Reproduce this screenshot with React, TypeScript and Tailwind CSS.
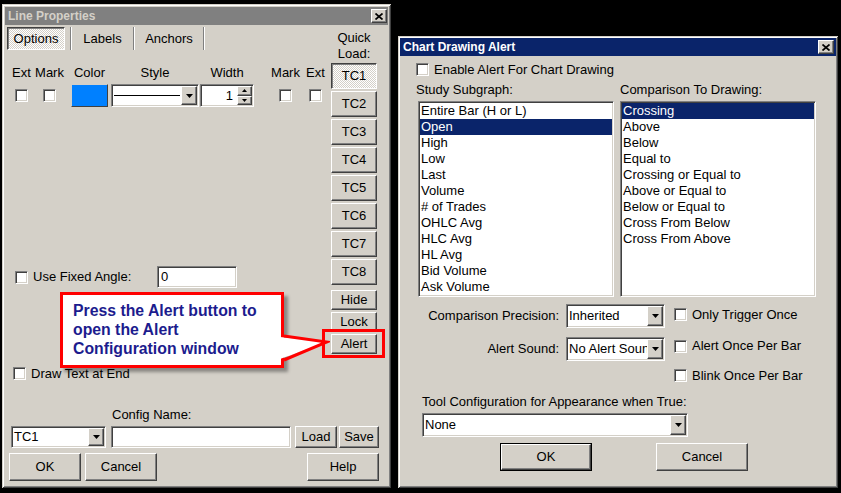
import React from "react";

const raised =
  "border border-t-white border-l-white border-r-[#404040] border-b-[#404040] shadow-[inset_-1px_-1px_0_#808080,inset_1px_1px_0_#d4d0c8]";
const sunken =
  "border border-t-[#808080] border-l-[#808080] border-r-white border-b-white shadow-[inset_1px_1px_0_#404040,inset_-1px_-1px_0_#d4d0c8]";
const pressed =
  "border border-t-[#404040] border-l-[#404040] border-r-white border-b-white shadow-[inset_1px_1px_0_#808080] bg-[repeating-conic-gradient(#ffffff_0%_25%,#d4d0c8_0%_50%)] bg-[length:2px_2px]";
const frame =
  "shadow-[inset_1px_1px_0_#d4d0c8,inset_-1px_-1px_0_#404040,inset_2px_2px_0_#ffffff,inset_-2px_-2px_0_#808080]";

function Arrow() {
  return (
    <svg width="7" height="4" viewBox="0 0 7 4">
      <path d="M0 0h7L3.5 4z" fill="#000" />
    </svg>
  );
}

function CloseBtn() {
  return (
    <div className={`${raised} bg-[#d4d0c8] w-[16px] h-[14px] flex items-center justify-center`}>
      <svg width="8" height="7" viewBox="0 0 8 7">
        <path d="M0.5 0.5L7.5 6.5M7.5 0.5L0.5 6.5" stroke="#000" strokeWidth="1.7" />
      </svg>
    </div>
  );
}

function Check({ className = "" }: { className?: string }) {
  return <div className={`${sunken} bg-white w-[13px] h-[13px] shrink-0 ${className}`} />;
}

function Btn({ children, className = "" }: { children?: React.ReactNode; className?: string }) {
  return (
    <div className={`${raised} bg-[#d4d0c8] flex items-center justify-center text-[13px] text-black ${className}`}>
      {children}
    </div>
  );
}

function Combo({ text, className = "" }: { text: string; className?: string }) {
  return (
    <div className={`${sunken} bg-white p-[1px] flex items-stretch ${className}`}>
      <div className="flex-1 overflow-hidden whitespace-nowrap pl-[1px] flex items-center text-[13px]">{text}</div>
      <div className={`${raised} bg-[#d4d0c8] w-[16px] flex items-center justify-center shrink-0`}>
        <Arrow />
      </div>
    </div>
  );
}

function Col({ label, width, className = "", children }: { label: string; width: string; className?: string; children: React.ReactNode }) {
  return (
    <div className={`flex flex-col items-center ${width} ${className}`}>
      <div className="h-[14px] leading-[14px] whitespace-nowrap">{label}</div>
      <div className="mt-[4px] h-[23px] w-full flex items-center justify-center">{children}</div>
    </div>
  );
}

function LineProperties() {
  const tcs = ["TC1", "TC2", "TC3", "TC4", "TC5", "TC6", "TC7", "TC8"];
  return (
    <div className={`absolute left-[2px] top-[4px] w-[389px] h-[484px] bg-[#d4d0c8] p-[3px] flex flex-col ${frame}`}>
      <div className="h-[18px] bg-[#808080] flex items-center justify-between pl-[3px] pr-[1px]">
        <span className="text-[12px] font-bold text-[#d4d0c8]">Line Properties</span>
        <CloseBtn />
      </div>

      <div className="flex">
        <div className="flex-1 flex flex-col text-[13px]">
          {/* tabs */}
          <div className="mt-[2px] h-[23px] flex items-stretch">
            <div className={`${pressed} ml-[2px] w-[58px] flex items-center justify-center`}>Options</div>
            <div className="ml-[5px] w-[2px] border-l border-l-[#808080] border-r border-r-white" />
            <div className="w-[61px] flex items-center justify-center">Labels</div>
            <div className="w-[2px] border-l border-l-[#808080] border-r border-r-white" />
            <div className="w-[68px] flex items-center justify-center">Anchors</div>
            <div className="w-[2px] border-l border-l-[#808080] border-r border-r-white" />
          </div>

          {/* labels + controls */}
          <div className="mt-[16px] flex items-start">
            <Col label="Ext" width="w-[27px]" className="ml-[3px]">
              <Check />
            </Col>
            <Col label="Mark" width="w-[27px]" className="ml-[1px]">
              <Check />
            </Col>
            <Col label="Color" width="w-[37px]" className="ml-[8px]">
              <div className="bg-[#0080ff] w-full h-full border border-t-[#d4d0c8] border-l-[#d4d0c8] border-r-[#404040] border-b-[#404040]" />
            </Col>
            <Col label="Style" width="w-[88px]" className="ml-[3px]">
              <div className={`${sunken} bg-white p-[1px] w-full h-full flex items-stretch`}>
                <div className="flex-1 flex items-center pl-[1px] pr-[1px]">
                  <div className="w-full h-[1px] bg-black" />
                </div>
                <div className={`${raised} bg-[#d4d0c8] w-[16px] flex items-center justify-center`}>
                  <Arrow />
                </div>
              </div>
            </Col>
            <Col label="Width" width="w-[54px]" className="ml-[1px]">
              <div className={`${sunken} bg-white p-[1px] w-full h-full flex items-stretch`}>
                <div className="flex-1 flex items-center justify-end pr-[4px]">1</div>
                <div className="w-[15px] flex flex-col">
                  <div className={`${raised} bg-[#d4d0c8] flex-1 flex items-center justify-center`}>
                    <svg width="5" height="3" viewBox="0 0 5 3">
                      <path d="M0 3h5L2.5 0z" fill="#000" />
                    </svg>
                  </div>
                  <div className={`${raised} bg-[#d4d0c8] flex-1 flex items-center justify-center`}>
                    <svg width="5" height="3" viewBox="0 0 5 3">
                      <path d="M0 0h5L2.5 3z" fill="#000" />
                    </svg>
                  </div>
                </div>
              </div>
            </Col>
            <Col label="Mark" width="w-[27px]" className="ml-[18px]">
              <Check />
            </Col>
            <Col label="Ext" width="w-[27px]" className="ml-[3px]">
              <Check />
            </Col>
          </div>

          {/* fixed angle */}
          <div className="mt-[159px] h-[22px] flex items-center">
            <Check className="ml-[10px]" />
            <span className="ml-[5px] w-[124px]">Use Fixed Angle:</span>
            <div className={`${sunken} bg-white w-[80px] h-[22px] flex items-center pl-[3px]`}>0</div>
          </div>

          <div className="mt-[79px] h-[13px] flex items-center">
            <Check className="ml-[8px]" />
            <span className="ml-[5px]">Draw Text at End</span>
          </div>
        </div>

        <div className="w-[46px] mr-[11px] flex flex-col text-[13px]">
          <div className="mt-[5px] text-center leading-[16px]">
            Quick
            <br />
            Load:
          </div>
          <div className="mt-[1px] flex flex-col gap-[2px]">
            {tcs.map((t, i) => (
              <div
                key={t}
                className={`h-[26px] flex items-center justify-center ${i === 0 ? pressed : `${raised} bg-[#d4d0c8]`}`}
              >
                {t}
              </div>
            ))}
          </div>
          <div className="mt-[5px] flex flex-col gap-[2px]">
            <Btn className="h-[20px]">Hide</Btn>
            <Btn className="h-[20px]">Lock</Btn>
            <Btn className="h-[20px]">Alert</Btn>
          </div>
        </div>
      </div>

      {/* bottom */}
      <div className="mt-auto mb-[4px] flex flex-col text-[13px]">
        <div className="ml-[107px] h-[14px] leading-[14px]">Config Name:</div>
        <div className="mt-[4px] h-[22px] flex">
          <Combo text="TC1" className="ml-[6px] w-[95px]" />
          <div className={`${sunken} bg-white ml-[5px] w-[180px]`} />
          <Btn className="ml-[4px] w-[42px]">Load</Btn>
          <Btn className="ml-[2px] w-[40px]">Save</Btn>
        </div>
        <div className="mt-[5px] h-[28px] flex">
          <Btn className="ml-[4px] w-[72px]">OK</Btn>
          <Btn className="ml-[4px] w-[72px]">Cancel</Btn>
          <Btn className="ml-auto mr-[9px] w-[72px]">Help</Btn>
        </div>
      </div>

      {/* callout */}
      <div className="absolute left-[58px] top-[288px] w-[224px] h-[76px] bg-white border-[3px] border-[#ff0000] shadow-[4px_4px_3px_rgba(0,0,0,0.35)] pl-[10px] pt-[6px] text-[15.8px] leading-[19px] font-bold text-[#1c1c8e] whitespace-nowrap">
        Press the Alert button to
        <br />
        open the Alert
        <br />
        Configuration window
      </div>
      <svg className="absolute left-[278px] top-[324px]" width="50" height="36" viewBox="0 0 50 36">
        <polygon points="0,9 47,14 0,31" fill="#ffffff" />
        <polyline points="4,8 47,14 4,32" fill="none" stroke="#ff0000" strokeWidth="3" />
      </svg>
      <div className="absolute left-[320px] top-[325px] w-[63px] h-[29px] border-[3px] border-[#ff0000]" />
    </div>
  );
}

function ChartDrawingAlert() {
  const subgraphs = [
    "Entire Bar (H or L)",
    "Open",
    "High",
    "Low",
    "Last",
    "Volume",
    "# of Trades",
    "OHLC Avg",
    "HLC Avg",
    "HL Avg",
    "Bid Volume",
    "Ask Volume",
  ];
  const comparisons = [
    "Crossing",
    "Above",
    "Below",
    "Equal to",
    "Crossing or Equal to",
    "Above or Equal to",
    "Below or Equal to",
    "Cross From Below",
    "Cross From Above",
  ];
  return (
    <div className={`absolute left-[398px] top-[36px] w-[440px] h-[452px] bg-[#d4d0c8] p-[2px] flex flex-col text-[13px] ${frame}`}>
      <div className="h-[18px] bg-[#0a246a] flex items-center justify-between pl-[3px] pr-[2px]">
        <span className="text-[12px] font-bold text-white">Chart Drawing Alert</span>
        <CloseBtn />
      </div>

      <div className="mt-[7px] h-[13px] flex items-center">
        <Check className="ml-[16px]" />
        <span className="ml-[5px]">Enable Alert For Chart Drawing</span>
      </div>

      <div className="mt-[7px] h-[14px] leading-[14px] flex">
        <span className="ml-[16px] w-[204px]">Study Subgraph:</span>
        <span>Comparison To Drawing:</span>
      </div>

      <div className="mt-[4px] ml-[18px] flex gap-[6px]">
        <div className={`${sunken} bg-white p-[1px] w-[196px] h-[196px]`}>
          {subgraphs.map((s) => (
            <div
              key={s}
              className={`h-[16px] leading-[16px] pl-[1px] whitespace-nowrap ${s === "Open" ? "bg-[#0a246a] text-white" : ""}`}
            >
              {s}
            </div>
          ))}
        </div>
        <div className={`${sunken} bg-white p-[1px] w-[196px] h-[196px]`}>
          {comparisons.map((s) => (
            <div
              key={s}
              className={`h-[16px] leading-[16px] pl-[1px] whitespace-nowrap ${s === "Crossing" ? "bg-[#0a246a] text-white" : ""}`}
            >
              {s}
            </div>
          ))}
        </div>
      </div>

      <div className="mt-[7px] h-[24px] flex items-center">
        <span className="w-[159px] text-right">Comparison Precision:</span>
        <Combo text="Inherited" className="ml-[7px] w-[99px] h-[24px]" />
        <div className="ml-[9px] -mt-[3px] flex items-center">
          <Check />
          <span className="ml-[5px]">Only Trigger Once</span>
        </div>
      </div>

      <div className="mt-[9px] h-[24px] flex items-center">
        <span className="w-[159px] text-right">Alert Sound:</span>
        <Combo text="No Alert Sound" className="ml-[7px] w-[99px] h-[24px]" />
        <div className="ml-[9px] -mt-[6px] flex items-center">
          <Check />
          <span className="ml-[5px]">Alert Once Per Bar</span>
        </div>
      </div>

      <div className="mt-[8px] h-[13px] flex items-center">
        <Check className="ml-[274px]" />
        <span className="ml-[5px]">Blink Once Per Bar</span>
      </div>

      <div className="mt-[13px] ml-[22px] h-[14px] leading-[14px]">Tool Configuration for Appearance when True:</div>
      <Combo text="None" className="mt-[4px] ml-[22px] w-[266px] h-[24px]" />

      <div className="mt-[6px] h-[28px] flex">
        <div className="ml-[100px] w-[92px] border border-black flex">
          <Btn className="flex-1">OK</Btn>
        </div>
        <Btn className="ml-[64px] w-[92px]">Cancel</Btn>
      </div>
    </div>
  );
}

export default function App() {
  return (
    <div className="relative w-[841px] h-[493px] bg-black overflow-hidden font-['Liberation_Sans',Arial,sans-serif] text-black">
      <LineProperties />
      <ChartDrawingAlert />
    </div>
  );
}
